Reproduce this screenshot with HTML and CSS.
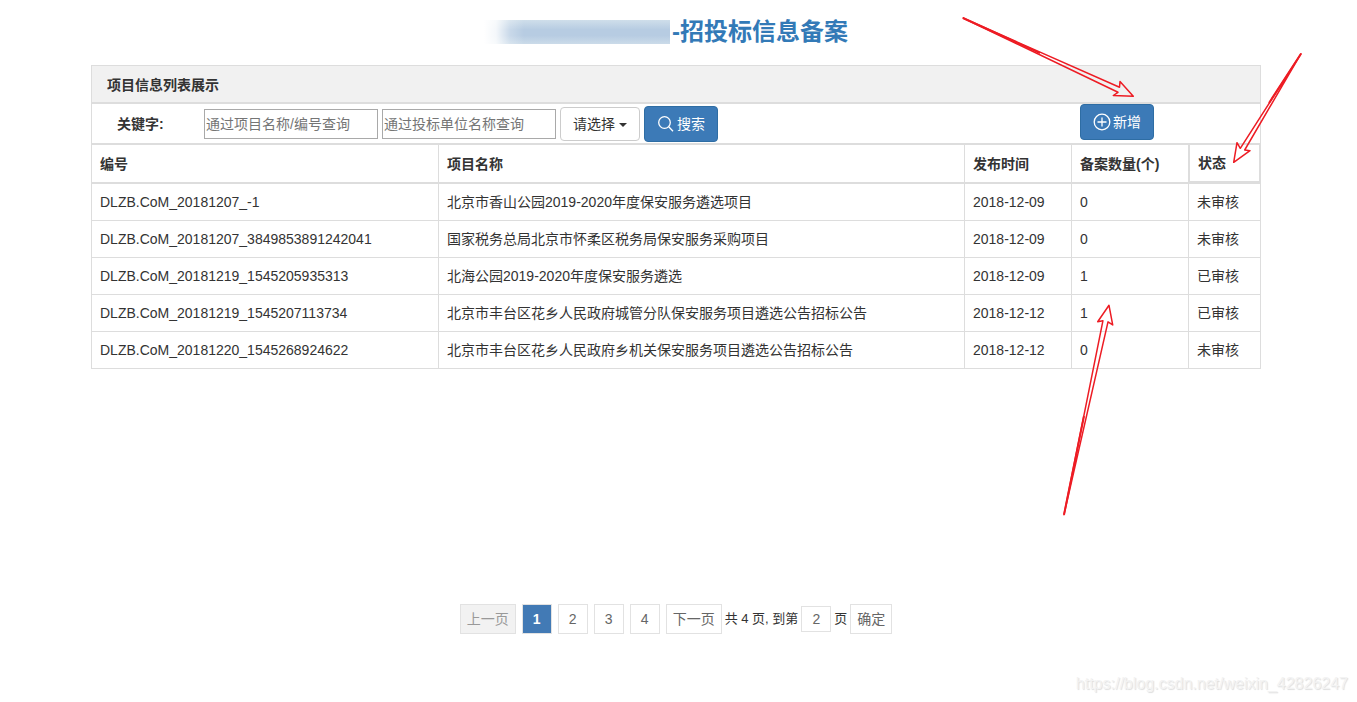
FILE: index.html
```html
<!DOCTYPE html>
<html lang="zh-CN">
<head>
<meta charset="utf-8">
<meta name="viewport" content="width=device-width, initial-scale=1">
<title>招投标信息备案</title>
<link rel="stylesheet" href="styles.css">
</head>
<body>
<main class="container">
  <h1 class="page-title"><span class="masked-name" aria-hidden="true"></span>-招投标信息备案</h1>

  <section class="panel">
    <h2 class="panel-heading">项目信息列表展示</h2>
    <form class="search-bar">
      <label class="search-label" for="project-key">关键字:</label>
      <input class="search-input" id="project-key" type="text" placeholder="通过项目名称/编号查询">
      <input class="search-input" type="text" placeholder="通过投标单位名称查询" aria-label="投标单位名称">
      <span class="dropdown">
        <select class="dropdown-select" aria-label="状态"><option>请选择</option></select>
        <span class="caret"></span>
      </span>
      <button class="btn" type="button">
        <svg class="btn-icon" viewBox="0 0 18 18" aria-hidden="true"><circle cx="7.5" cy="7.5" r="5.8"/><path d="M11.8 11.8 16 16.2"/></svg>
        <span>搜索</span>
      </button>
      <button class="btn btn-add" type="button">
        <svg class="btn-icon" viewBox="0 0 18 18" aria-hidden="true"><circle cx="9" cy="9" r="7.8"/><path d="M9 4.5v9M4.5 9h9"/></svg>
        <span>新增</span>
      </button>
    </form>
    <table class="records">
      <colgroup><col class="col-code"><col><col class="col-date"><col class="col-count"><col class="col-status"></colgroup>
      <thead>
        <tr><th>编号</th><th>项目名称</th><th>发布时间</th><th>备案数量(个)</th><th class="status-head">状态</th></tr>
      </thead>
      <tbody>
        <tr><td>DLZB.CoM_20181207_-1</td><td>北京市香山公园2019-2020年度保安服务遴选项目</td><td>2018-12-09</td><td>0</td><td>未审核</td></tr>
        <tr><td>DLZB.CoM_20181207_3849853891242041</td><td>国家税务总局北京市怀柔区税务局保安服务采购项目</td><td>2018-12-09</td><td>0</td><td>未审核</td></tr>
        <tr><td>DLZB.CoM_20181219_1545205935313</td><td>北海公园2019-2020年度保安服务遴选</td><td>2018-12-09</td><td>1</td><td>已审核</td></tr>
        <tr><td>DLZB.CoM_20181219_1545207113734</td><td>北京市丰台区花乡人民政府城管分队保安服务项目遴选公告招标公告</td><td>2018-12-12</td><td>1</td><td>已审核</td></tr>
        <tr><td>DLZB.CoM_20181220_1545268924622</td><td>北京市丰台区花乡人民政府乡机关保安服务项目遴选公告招标公告</td><td>2018-12-12</td><td>0</td><td>未审核</td></tr>
      </tbody>
    </table>
  </section>

  <nav class="pager" aria-label="分页">
    <div class="pager-pages">
      <button class="page page-wide" type="button" disabled>上一页</button>
      <button class="page page-current" type="button" aria-current="page">1</button>
      <button class="page" type="button">2</button>
      <button class="page" type="button">3</button>
      <button class="page" type="button">4</button>
      <button class="page page-wide" type="button">下一页</button>
    </div>
    <label class="pager-text" for="page-number">共 4 页, 到第</label>
    <input class="page-number" id="page-number" type="text" value="2">
    <span class="pager-text">页</span>
    <button class="page page-confirm" type="button">确定</button>
  </nav>
</main>

<svg class="arrows" viewBox="0 0 1357 702" aria-hidden="true">
  <path d="M963 18 1119.5 87.3 1120 81.5 1133.3 96.2 1113.3 95.5 1118 92.3Z"/>
  <path d="M1301 53.7 1240.3 148.3 1237 142.7 1233.7 162.3 1250 150.7 1244.7 150Z"/>
  <path d="M1064 514.7 1102.9 320.8 1097.7 321.7 1109 305.3 1112.7 324.9 1108 321.8Z"/>
  <path class="arrow-tail" d="M963 18 1040 53.2M1301 53.7 1269 103M1064 514.7 1084 416"/>
</svg>
<div class="watermark">https://blog.csdn.net/weixin_42826247</div>
</body>
</html>
```

FILE: styles.css
```css
* {
  box-sizing: border-box;
}

body {
  position: relative;
  min-height: 100vh;
  margin: 0;
  background: #fff;
  color: #333;
  font-family: "Liberation Sans", "Noto Sans CJK SC", sans-serif;
  font-size: 14px;
  line-height: 20px;
}

button,
input,
select {
  margin: 0;
  font: inherit;
}

.container {
  padding: 18px 96px 0 91px;
}

.page-title {
  display: flex;
  justify-content: center;
  align-items: center;
  margin: 0 0 19px;
  color: #337ab7;
  font-size: 24px;
  line-height: 28px;
}

/* Hides the name of the organisation */
.masked-name {
  width: 186px;
  height: 24px;
  margin: 0 2px 0 -20px;
  background:
    linear-gradient(to right, #fff, rgba(255, 255, 255, 0.85) 12px, rgba(255, 255, 255, 0.25) 26px, transparent 40px),
    linear-gradient(#cfdeea, #b7cce2 40%, #b7cce2 65%, #cbdbe9);
}

.panel-heading {
  margin: 0;
  padding: 10px 15px 7px;
  border: 1px solid #ddd;
  border-bottom-width: 2px;
  background: #f1f1f1;
  font-size: 14px;
  line-height: 19px;
}

.search-bar {
  display: flex;
  align-items: center;
  gap: 4px;
  height: 41px;
  padding: 0 106px 0 25px;
  border: 1px solid #ddd;
  border-width: 0 1px 2px;
}

.search-label {
  width: 83px;
  font-weight: bold;
}

.search-input {
  width: 174px;
  height: 30px;
  padding: 0 1px;
  border: 1px solid #a9a9a9;
  background: #fff;
}

.search-input::placeholder {
  color: #757575;
}

.dropdown {
  position: relative;
  width: 80px;
}

.dropdown-select {
  display: block;
  width: 100%;
  height: 34px;
  padding: 0 12px;
  appearance: none;
  border: 1px solid #ccc;
  border-radius: 4px;
  background: #fff;
  color: #333;
}

.caret {
  position: absolute;
  top: 16px;
  right: 13px;
  border: 4px solid transparent;
  border-top-color: #333;
  border-bottom: 0;
  pointer-events: none;
}

.btn {
  display: flex;
  align-items: center;
  justify-content: center;
  gap: 2px;
  width: 74px;
  height: 36px;
  padding: 0;
  border: 1px solid #2e6da4;
  border-radius: 4px;
  background: #3c7ab7;
  color: #fff;
}

.btn-add {
  align-self: flex-start;
  margin-left: auto;
}

.btn-icon {
  width: 18px;
  height: 18px;
  fill: none;
  stroke: #fff;
  stroke-width: 1.3;
}

.records {
  width: 100%;
  table-layout: fixed;
  border-spacing: 0;
  border-left: 1px solid #ddd;
}

.col-code {
  width: 347px;
}

.col-date {
  width: 107px;
}

.col-count {
  width: 117px;
}

.col-status {
  width: 72px;
}

.records th,
.records td {
  padding: 8px;
  border-right: 1px solid #ddd;
  border-bottom: 1px solid #ddd;
  text-align: left;
}

.records th {
  padding: 9px 8px 8px;
  border-bottom-width: 2px;
}

.records .status-head {
  padding: 7px 8px 8px;
  border-width: 0 2px 3px 1px;
  border-style: solid;
  border-color: #ddd;
}

.pager {
  display: flex;
  align-items: center;
  justify-content: center;
  gap: 3px;
  margin-top: 235px;
}

.pager-pages {
  display: flex;
  gap: 6px;
}

.page {
  width: 30px;
  height: 30px;
  padding: 0;
  border: 1px solid #e2e2e2;
  background: #fff;
  color: #666;
}

.page-wide {
  width: 56px;
}

.page:disabled {
  background: #f2f2f2;
  color: #999;
}

.page-current {
  background: #427ab5;
  color: #fff;
  font-weight: bold;
}

.page-confirm {
  width: 42px;
}

.pager-text {
  font-size: 13px;
}

.page-number {
  width: 30px;
  height: 26px;
  padding: 0;
  border: 1px solid #e2e2e2;
  color: #666;
  text-align: center;
}

.arrows {
  position: absolute;
  top: 0;
  left: 0;
  width: 1357px;
  fill: none;
  stroke: #ed1c24;
  stroke-width: 1.5;
  stroke-linejoin: round;
  pointer-events: none;
}

.arrow-tail {
  stroke-width: 2;
}

.watermark {
  position: absolute;
  right: 9px;
  bottom: 8px;
  color: #f3f3f3;
  font-size: 16px;
  text-shadow: 1px 1px 1px #ddd;
}
```
